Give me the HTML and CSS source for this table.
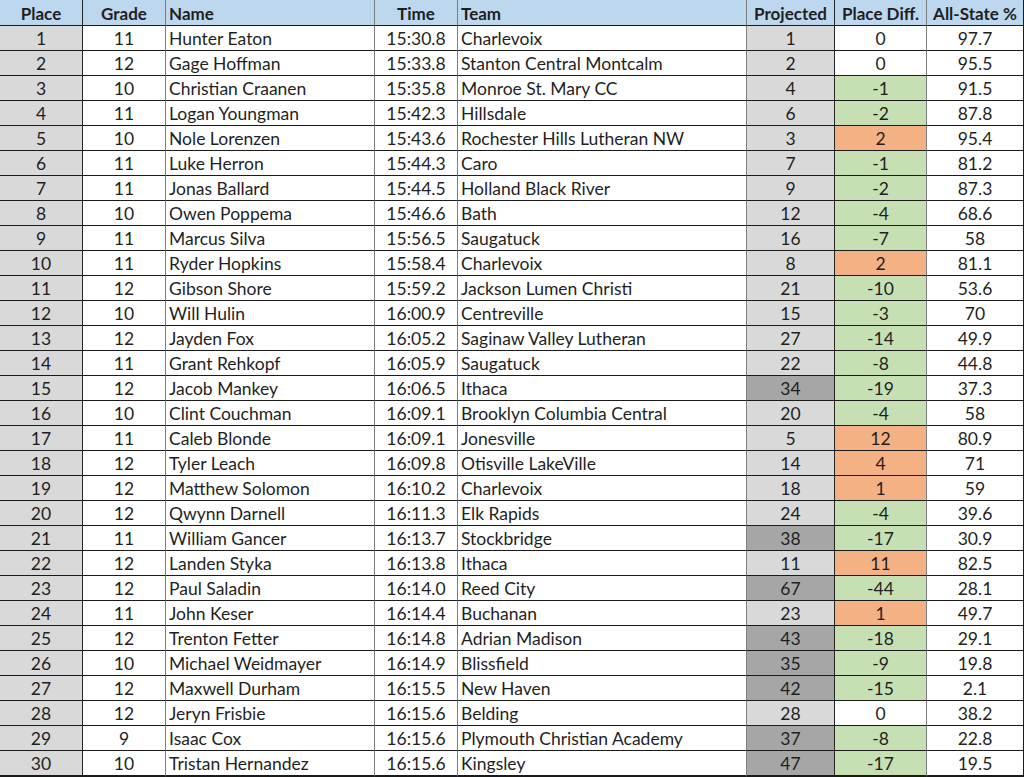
FILE: index.html
```html
<!DOCTYPE html>
<html>
<head>
<meta charset="utf-8">
<link rel="stylesheet" href="styles.css">
</head>
<body>
<div class="sheet">
  <div class="row head">
    <div class="c c-place">Place</div>
    <div class="c c-grade">Grade</div>
    <div class="c c-name">Name</div>
    <div class="c c-time">Time</div>
    <div class="c c-team">Team</div>
    <div class="c c-proj">Projected</div>
    <div class="c c-diff">Place Diff.</div>
    <div class="c c-all">All-State %</div>
  </div>
  <div class="row"><div class="c c-place">1</div><div class="c c-grade">11</div><div class="c c-name">Hunter Eaton</div><div class="c c-time">15:30.8</div><div class="c c-team">Charlevoix</div><div class="c c-proj">1</div><div class="c c-diff">0</div><div class="c c-all">97.7</div></div>
  <div class="row"><div class="c c-place">2</div><div class="c c-grade">12</div><div class="c c-name">Gage Hoffman</div><div class="c c-time">15:33.8</div><div class="c c-team">Stanton Central Montcalm</div><div class="c c-proj">2</div><div class="c c-diff">0</div><div class="c c-all">95.5</div></div>
  <div class="row"><div class="c c-place">3</div><div class="c c-grade">10</div><div class="c c-name">Christian Craanen</div><div class="c c-time">15:35.8</div><div class="c c-team">Monroe St. Mary CC</div><div class="c c-proj">4</div><div class="c c-diff neg">-1</div><div class="c c-all">91.5</div></div>
  <div class="row"><div class="c c-place">4</div><div class="c c-grade">11</div><div class="c c-name">Logan Youngman</div><div class="c c-time">15:42.3</div><div class="c c-team">Hillsdale</div><div class="c c-proj">6</div><div class="c c-diff neg">-2</div><div class="c c-all">87.8</div></div>
  <div class="row"><div class="c c-place">5</div><div class="c c-grade">10</div><div class="c c-name">Nole Lorenzen</div><div class="c c-time">15:43.6</div><div class="c c-team">Rochester Hills Lutheran NW</div><div class="c c-proj">3</div><div class="c c-diff pos">2</div><div class="c c-all">95.4</div></div>
  <div class="row"><div class="c c-place">6</div><div class="c c-grade">11</div><div class="c c-name">Luke Herron</div><div class="c c-time">15:44.3</div><div class="c c-team">Caro</div><div class="c c-proj">7</div><div class="c c-diff neg">-1</div><div class="c c-all">81.2</div></div>
  <div class="row"><div class="c c-place">7</div><div class="c c-grade">11</div><div class="c c-name">Jonas Ballard</div><div class="c c-time">15:44.5</div><div class="c c-team">Holland Black River</div><div class="c c-proj">9</div><div class="c c-diff neg">-2</div><div class="c c-all">87.3</div></div>
  <div class="row"><div class="c c-place">8</div><div class="c c-grade">10</div><div class="c c-name">Owen Poppema</div><div class="c c-time">15:46.6</div><div class="c c-team">Bath</div><div class="c c-proj">12</div><div class="c c-diff neg">-4</div><div class="c c-all">68.6</div></div>
  <div class="row"><div class="c c-place">9</div><div class="c c-grade">11</div><div class="c c-name">Marcus Silva</div><div class="c c-time">15:56.5</div><div class="c c-team">Saugatuck</div><div class="c c-proj">16</div><div class="c c-diff neg">-7</div><div class="c c-all">58</div></div>
  <div class="row"><div class="c c-place">10</div><div class="c c-grade">11</div><div class="c c-name">Ryder Hopkins</div><div class="c c-time">15:58.4</div><div class="c c-team">Charlevoix</div><div class="c c-proj">8</div><div class="c c-diff pos">2</div><div class="c c-all">81.1</div></div>
  <div class="row"><div class="c c-place">11</div><div class="c c-grade">12</div><div class="c c-name">Gibson Shore</div><div class="c c-time">15:59.2</div><div class="c c-team">Jackson Lumen Christi</div><div class="c c-proj">21</div><div class="c c-diff neg">-10</div><div class="c c-all">53.6</div></div>
  <div class="row"><div class="c c-place">12</div><div class="c c-grade">10</div><div class="c c-name">Will Hulin</div><div class="c c-time">16:00.9</div><div class="c c-team">Centreville</div><div class="c c-proj">15</div><div class="c c-diff neg">-3</div><div class="c c-all">70</div></div>
  <div class="row"><div class="c c-place">13</div><div class="c c-grade">12</div><div class="c c-name">Jayden Fox</div><div class="c c-time">16:05.2</div><div class="c c-team">Saginaw Valley Lutheran</div><div class="c c-proj">27</div><div class="c c-diff neg">-14</div><div class="c c-all">49.9</div></div>
  <div class="row"><div class="c c-place">14</div><div class="c c-grade">11</div><div class="c c-name">Grant Rehkopf</div><div class="c c-time">16:05.9</div><div class="c c-team">Saugatuck</div><div class="c c-proj">22</div><div class="c c-diff neg">-8</div><div class="c c-all">44.8</div></div>
  <div class="row"><div class="c c-place">15</div><div class="c c-grade">12</div><div class="c c-name">Jacob Mankey</div><div class="c c-time">16:06.5</div><div class="c c-team">Ithaca</div><div class="c c-proj far">34</div><div class="c c-diff neg">-19</div><div class="c c-all">37.3</div></div>
  <div class="row"><div class="c c-place">16</div><div class="c c-grade">10</div><div class="c c-name">Clint Couchman</div><div class="c c-time">16:09.1</div><div class="c c-team">Brooklyn Columbia Central</div><div class="c c-proj">20</div><div class="c c-diff neg">-4</div><div class="c c-all">58</div></div>
  <div class="row"><div class="c c-place">17</div><div class="c c-grade">11</div><div class="c c-name">Caleb Blonde</div><div class="c c-time">16:09.1</div><div class="c c-team">Jonesville</div><div class="c c-proj">5</div><div class="c c-diff pos">12</div><div class="c c-all">80.9</div></div>
  <div class="row"><div class="c c-place">18</div><div class="c c-grade">12</div><div class="c c-name">Tyler Leach</div><div class="c c-time">16:09.8</div><div class="c c-team">Otisville LakeVille</div><div class="c c-proj">14</div><div class="c c-diff pos">4</div><div class="c c-all">71</div></div>
  <div class="row"><div class="c c-place">19</div><div class="c c-grade">12</div><div class="c c-name">Matthew Solomon</div><div class="c c-time">16:10.2</div><div class="c c-team">Charlevoix</div><div class="c c-proj">18</div><div class="c c-diff pos">1</div><div class="c c-all">59</div></div>
  <div class="row"><div class="c c-place">20</div><div class="c c-grade">12</div><div class="c c-name">Qwynn Darnell</div><div class="c c-time">16:11.3</div><div class="c c-team">Elk Rapids</div><div class="c c-proj">24</div><div class="c c-diff neg">-4</div><div class="c c-all">39.6</div></div>
  <div class="row"><div class="c c-place">21</div><div class="c c-grade">11</div><div class="c c-name">William Gancer</div><div class="c c-time">16:13.7</div><div class="c c-team">Stockbridge</div><div class="c c-proj far">38</div><div class="c c-diff neg">-17</div><div class="c c-all">30.9</div></div>
  <div class="row"><div class="c c-place">22</div><div class="c c-grade">12</div><div class="c c-name">Landen Styka</div><div class="c c-time">16:13.8</div><div class="c c-team">Ithaca</div><div class="c c-proj">11</div><div class="c c-diff pos">11</div><div class="c c-all">82.5</div></div>
  <div class="row"><div class="c c-place">23</div><div class="c c-grade">12</div><div class="c c-name">Paul Saladin</div><div class="c c-time">16:14.0</div><div class="c c-team">Reed City</div><div class="c c-proj far">67</div><div class="c c-diff neg">-44</div><div class="c c-all">28.1</div></div>
  <div class="row"><div class="c c-place">24</div><div class="c c-grade">11</div><div class="c c-name">John Keser</div><div class="c c-time">16:14.4</div><div class="c c-team">Buchanan</div><div class="c c-proj">23</div><div class="c c-diff pos">1</div><div class="c c-all">49.7</div></div>
  <div class="row"><div class="c c-place">25</div><div class="c c-grade">12</div><div class="c c-name">Trenton Fetter</div><div class="c c-time">16:14.8</div><div class="c c-team">Adrian Madison</div><div class="c c-proj far">43</div><div class="c c-diff neg">-18</div><div class="c c-all">29.1</div></div>
  <div class="row"><div class="c c-place">26</div><div class="c c-grade">10</div><div class="c c-name">Michael Weidmayer</div><div class="c c-time">16:14.9</div><div class="c c-team">Blissfield</div><div class="c c-proj far">35</div><div class="c c-diff neg">-9</div><div class="c c-all">19.8</div></div>
  <div class="row"><div class="c c-place">27</div><div class="c c-grade">12</div><div class="c c-name">Maxwell Durham</div><div class="c c-time">16:15.5</div><div class="c c-team">New Haven</div><div class="c c-proj far">42</div><div class="c c-diff neg">-15</div><div class="c c-all">2.1</div></div>
  <div class="row"><div class="c c-place">28</div><div class="c c-grade">12</div><div class="c c-name">Jeryn Frisbie</div><div class="c c-time">16:15.6</div><div class="c c-team">Belding</div><div class="c c-proj">28</div><div class="c c-diff">0</div><div class="c c-all">38.2</div></div>
  <div class="row"><div class="c c-place">29</div><div class="c c-grade">9</div><div class="c c-name">Isaac Cox</div><div class="c c-time">16:15.6</div><div class="c c-team">Plymouth Christian Academy</div><div class="c c-proj far">37</div><div class="c c-diff neg">-8</div><div class="c c-all">22.8</div></div>
  <div class="row last"><div class="c c-place">30</div><div class="c c-grade">10</div><div class="c c-name">Tristan Hernandez</div><div class="c c-time">16:15.6</div><div class="c c-team">Kingsley</div><div class="c c-proj far">47</div><div class="c c-diff neg">-17</div><div class="c c-all">19.5</div></div>
</div>
</body>
</html>
```
FILE: styles.css
```css
html, body {
  margin: 0;
  padding: 0;
  background: #ffffff;
}
body {
  font-family: Lato, "Liberation Sans", sans-serif;
  font-size: 17.5px;
  color: #1f1f1f;
}
.sheet {
  width: 1024px;
  display: flex;
  flex-direction: column;
}
.row {
  display: grid;
  grid-template-columns: 83px 83px 209px 83px 289px 88px 92px 97px;
  height: 25px;
}
.row.head {
  height: 26px;
  background: #bdd7ee;
  font-weight: bold;
  font-size: 17px;
}
.row.last {
  height: 26px;
}
.c {
  box-sizing: border-box;
  border-right: 1px solid #7f7f7f;
  border-bottom: 1px solid #1a1a1a;
  display: flex;
  align-items: center;
  justify-content: center;
  white-space: nowrap;
  overflow: hidden;
  padding-top: 1px;
  line-height: 1;
}
.row.last .c {
  border-bottom-width: 2px;
}
.c-place {
  border-right-color: #262626;
}
.row:not(.head) .c-place {
  background: #d9d9d9;
}
.c-name, .c-team {
  justify-content: flex-start;
  padding-left: 3px;
}
.row:not(.head) .c-proj {
  background: #d9d9d9;
}
.c-proj {
  border-right-color: #262626;
}
.row:not(.head) .c-proj.far {
  background: #a6a6a6;
}
.c-diff.neg {
  background: #c6e0b4;
}
.c-diff.pos {
  background: #f4b183;
}
.c-all {
  border-right: 1px solid #1a1a1a;
}
```
